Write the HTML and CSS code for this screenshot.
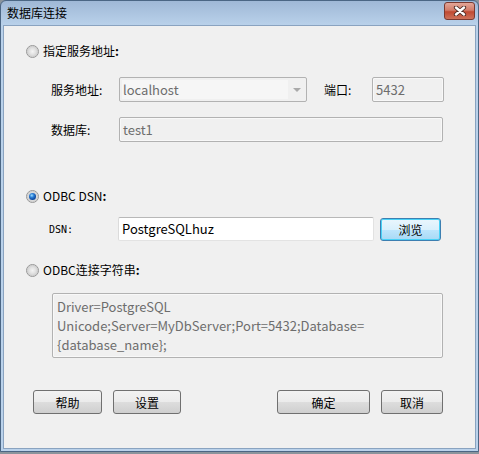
FILE: index.html
```html
<!DOCTYPE html>
<html lang="zh-CN">
<head>
    <meta charset="UTF-8">
    <title>数据库连接</title>
    <link rel="stylesheet" href="styles.css">
</head>
<body>
    <div class="window">
        <div class="titlebar">
            <span class="title">数据库连接</span>
            <span class="close">
                <svg width="16" height="10" viewBox="0 0 16 10">
                    <path d="M4 1.5 L12 8.5 M12 1.5 L4 8.5" stroke="#4a2a24" stroke-width="4.2" stroke-linecap="round"/>
                    <path d="M4 1.5 L12 8.5 M12 1.5 L4 8.5" stroke="#ffffff" stroke-width="2.4" stroke-linecap="round"/>
                </svg>
            </span>
        </div>

        <div class="client">
            <div class="option first">
                <span class="radio"></span>
                <span class="option-label">指定服务地址<b>:</b></span>
            </div>

            <div class="row row-server">
                <span class="label">服务地址:</span>
                <div class="field combo">
                    <span class="combo-text">localhost</span>
                    <span class="combo-arrow"></span>
                </div>
                <span class="label port-label">端口:</span>
                <div class="field port">5432</div>
            </div>

            <div class="row row-db">
                <span class="label">数据库:</span>
                <div class="field db">test1</div>
            </div>

            <div class="option second">
                <span class="radio checked"></span>
                <span class="option-label">ODBC DSN<b>:</b></span>
            </div>

            <div class="row row-dsn">
                <span class="label dsn-label">DSN:</span>
                <div class="field dsn">PostgreSQLhuz</div>
                <button class="btn focused browse">浏览</button>
            </div>

            <div class="option third">
                <span class="radio"></span>
                <span class="option-label">ODBC连接字符串<b>:</b></span>
            </div>

            <div class="connstr">Driver=PostgreSQL<br>Unicode;Server=MyDbServer;Port=5432;Database=<br>{database_name};</div>

            <div class="buttons">
                <button class="btn help">帮助</button>
                <button class="btn setup">设置</button>
                <span class="spacer"></span>
                <button class="btn ok">确定</button>
                <button class="btn cancel">取消</button>
            </div>
        </div>
    </div>
</body>
</html>
```

FILE: styles.css
```css
html, body{
    margin: 0;
    padding: 0;
}

body{
    width: 479px;
    height: 454px;
    background: #8a949c;
    font-family: "Noto Sans CJK SC", "Noto Sans", sans-serif;
    font-size: 12px;
    color: #000;
    overflow: hidden;
}

.window{
    box-sizing: border-box;
    width: 479px;
    height: 452px;
    border: 1px solid #4b6684;
    border-radius: 6px 6px 0 0;
    background: linear-gradient(#9fb8d6, #b9d1ea 24px, #bad2eb);
    padding: 0 2px 2px 2px;
    display: flex;
    flex-direction: column;
}

.titlebar{
    height: 24px;
    display: flex;
    align-items: center;
    padding-left: 4px;
    flex: none;
}

.title{
    flex: 1;
    font-size: 12px;
    line-height: 14px;
    margin-top: -1px;
}

.close{
    width: 29px;
    height: 16px;
    margin-top: -4px;
    margin-right: 1px;
    border: 1px solid #7a3a31;
    border-radius: 3px;
    background: linear-gradient(#e3a698, #d27c69 45%, #c04a32 55%, #cd725b);
    display: flex;
    align-items: center;
    justify-content: center;
}

.client{
    flex: 1;
    background: #f0f0f0;
    border: 1px solid #8aa3c0;
    padding-left: 22px;
    padding-right: 32px;
}

/* radio rows */
.option{
    display: flex;
    align-items: center;
    height: 16px;
}

.option.first{ margin-top: 17px; }
.option.second{ margin-top: 46px; }
.option.third{ margin-top: 21px; }

.option-label{
    margin-left: 4px;
    line-height: 16px;
}

.option-label b{
    font-weight: bold;
}

.radio{
    box-sizing: border-box;
    width: 13px;
    height: 13px;
    border-radius: 50%;
    border: 1px solid #979797;
    background: radial-gradient(circle at 50% 50%, #f4f4f4 0, #e2e2e2 3px, #d2d2d2 5px, #f6f6f6 6px);
    position: relative;
}

.radio.checked::after{
    content: "";
    position: absolute;
    left: 2px;
    top: 2px;
    width: 7px;
    height: 7px;
    border-radius: 50%;
    background: radial-gradient(circle at 40% 35%, #9ee0ff 0, #2d7fd6 2px, #0d4aa0 4px);
}

/* field rows */
.row{
    display: flex;
    align-items: center;
    padding-left: 25px;
}

.row-server{ margin-top: 18px; }
.row-db{ margin-top: 15px; }
.row-dsn{ margin-top: 13px; padding-left: 23px; }

.label{
    width: 68px;
    flex: none;
}

.port-label{
    width: 48px;
    margin-left: 17px;
}

.dsn-label{
    width: 69px;
    font-family: "DejaVu Sans Mono", monospace;
    font-size: 10px;
}

.field{
    box-sizing: border-box;
    height: 25px;
    border: 1px solid #b2b2b2;
    border-radius: 2px;
    background: #f0f0f0;
    color: #6d6d6d;
    font-size: 13px;
    line-height: 23px;
    padding-left: 3px;
    flex: none;
    box-shadow: inset 0 0 0 1px #f8f8f8;
}

.combo{
    width: 188px;
    display: flex;
    padding: 2px 0 2px 2px;
    box-shadow: none;
}

.combo-text{
    width: 165px;
    background: #f6f6f6;
    line-height: 19px;
    padding-left: 1px;
}

.combo-arrow{
    flex: 1;
    display: flex;
    align-items: center;
    justify-content: center;
}

.combo-arrow::before{
    content: "";
    border-left: 4px solid transparent;
    border-right: 4px solid transparent;
    border-top: 4px solid #a9a9a9;
}

.port{
    width: 72px;
}

.db{
    width: 324px;
}

.dsn{
    width: 256px;
    height: 24px;
    background: #fff;
    color: #000;
    border-color: #b8b8b8 #e2e2e2 #e3e3e3 #dbdbdb;
    box-shadow: none;
    line-height: 22px;
}

/* connection string */
.connstr{
    box-sizing: border-box;
    margin: 15px 0 0 26px;
    width: 391px;
    height: 65px;
    border: 1px solid #b2b2b2;
    border-radius: 2px;
    box-shadow: inset 0 0 0 1px #f8f8f8;
    padding: 3px 0 0 4px;
    color: #6d6d6d;
    font-size: 13px;
    line-height: 19px;
}

/* buttons */
.btn{
    box-sizing: border-box;
    height: 24px;
    border: 1px solid #707070;
    border-radius: 3px;
    background: linear-gradient(#f2f2f2, #ebebeb 50%, #dddddd 50%, #cfcfcf);
    font-family: "Noto Sans CJK SC", sans-serif;
    font-size: 12px;
    color: #000;
    padding: 0;
    flex: none;
}

.btn.focused{
    border-color: #3c7fb1;
    box-shadow: inset 0 0 0 1px #48d2f7;
    background: linear-gradient(#eaf6fd, #d9f0fc 50%, #bee6fd 50%, #a7d9f5);
}

.browse{
    width: 61px;
    height: 23px;
    margin-left: 6px;
    margin-top: 1px;
}

.buttons{
    display: flex;
    margin-top: 32px;
    padding-left: 7px;
}

.help{ width: 69px; }
.setup{ width: 68px; margin-left: 11px; }
.spacer{ flex: 1; }
.ok{ width: 93px; }
.cancel{ width: 62px; margin-left: 11px; }
```
